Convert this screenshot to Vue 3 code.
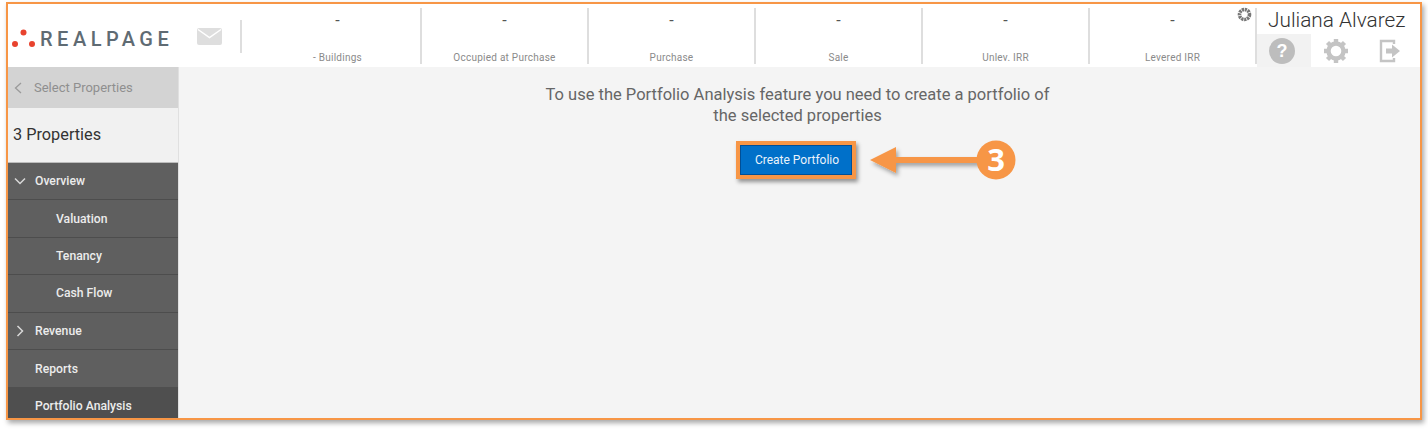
<template>
  <div class="page">
    <div class="frame">
      <header class="topbar">
        <div class="logo">
          <svg class="logo-dots" width="24" height="18" viewBox="0 0 24 18">
            <circle cx="11.500" cy="3.500" r="3" fill="#e8432e" />
            <circle cx="3" cy="15" r="3" fill="#e8432e" />
            <circle cx="20" cy="15" r="3" fill="#e8432e" />
          </svg>
          <span class="logo-text">REALPAGE</span>
        </div>
        <div class="mail">
          <svg width="25" height="17" viewBox="0 0 25 17">
            <rect width="25" height="17" rx="2" fill="#dedede" />
            <path d="M1 1.500 L12.500 9.500 L24 1.500" fill="none" stroke="#fff" stroke-width="1.500" />
          </svg>
        </div>
        <div class="stats">
          <div v-for="s in stats" :key="s" class="stat">
            <div class="stat-value">-</div>
            <div class="stat-label">{{ s }}</div>
          </div>
        </div>
        <div class="user">
          <div class="user-name">Juliana Alvarez</div>
          <div class="user-icons">
            <div class="user-icon help">
              <svg width="26" height="26" viewBox="0 0 26 26">
                <circle cx="13" cy="13" r="13" fill="#bdbdbd" />
                <text x="13" y="19" text-anchor="middle" class="help-mark">?</text>
              </svg>
            </div>
            <div class="user-icon">
              <svg width="26" height="26" viewBox="0 0 26 26">
                <circle cx="13" cy="13" r="7.500" fill="none" stroke="#c4c4c4" stroke-width="4.400" />
                <g stroke="#c4c4c4" stroke-width="4.400">
                  <path d="M13 1v4M13 21v4M1 13h4M21 13h4M4.500 4.500l2.800 2.800M18.700 18.700l2.800 2.800M4.500 21.500l2.800-2.800M18.700 7.300l2.800-2.800" />
                </g>
              </svg>
            </div>
            <div class="user-icon">
              <svg width="22" height="24" viewBox="0 0 22 24">
                <path d="M15 5V2H2v20h13v-3" fill="none" stroke="#c4c4c4" stroke-width="2.400" />
                <path d="M7 9.500h6V5.500l8 6.500-8 6.500v-4H7z" fill="#c4c4c4" />
              </svg>
            </div>
          </div>
        </div>
        <svg class="spinner" width="15" height="15" viewBox="0 0 15 15">
          <circle cx="7.500" cy="7.500" r="5" fill="none" stroke="#777" stroke-width="3.600" stroke-dasharray="2.200 0.700" />
        </svg>
      </header>

      <div class="body">
        <aside class="sidebar">
          <div class="back">
            <svg width="8" height="12" viewBox="0 0 8 12">
              <path d="M7 1 L1.500 6 L7 11" fill="none" stroke="#9a9a9a" stroke-width="1.300" />
            </svg>
            <span>Select Properties</span>
          </div>
          <div class="count">3 Properties</div>
          <nav class="nav">
            <div class="nav-row">
              <svg class="chev" width="12" height="8" viewBox="0 0 12 8">
                <path d="M1 1.500 L6 6.500 L11 1.500" fill="none" stroke="#d8d8d8" stroke-width="1.500" />
              </svg>
              <span>Overview</span>
            </div>
            <div class="nav-row sub">Valuation</div>
            <div class="nav-row sub">Tenancy</div>
            <div class="nav-row sub">Cash Flow</div>
            <div class="nav-row">
              <svg class="chev" width="12" height="12" viewBox="0 0 12 12">
                <path d="M3.500 1 L8.500 6 L3.500 11" fill="none" stroke="#d8d8d8" stroke-width="1.500" />
              </svg>
              <span>Revenue</span>
            </div>
            <div class="nav-row plain">Reports</div>
            <div class="nav-row plain active">Portfolio Analysis</div>
          </nav>
        </aside>

        <main class="content">
          <p class="message">To use the Portfolio Analysis feature you need to create a portfolio of the selected properties</p>
          <button class="create">Create Portfolio</button>
        </main>
      </div>

      <svg class="callout" width="150" height="44" viewBox="0 0 150 44">
        <defs>
          <filter id="arrowShadow" x="-10%" y="-30%" width="125%" height="170%">
            <feDropShadow dx="2" dy="3" stdDeviation="2" flood-color="#000" flood-opacity="0.35" />
          </filter>
        </defs>
        <path d="M1 21 L27 8 V18 H112 V24 H27 V34 Z" fill="#f79646" filter="url(#arrowShadow)" />
        <circle cx="127" cy="21" r="19.500" fill="#f79646" />
        <text x="127" y="32" text-anchor="middle" class="callout-num">3</text>
      </svg>
    </div>
  </div>
</template>

<script setup>
const stats = ['- Buildings', 'Occupied at Purchase', 'Purchase', 'Sale', 'Unlev. IRR', 'Levered IRR']
</script>

<style>
html, body {
  margin: 0;
  background: #fff;
}
</style>

<style scoped>
.page {
  width: 1428px;
  height: 430px;
  box-sizing: border-box;
  padding: 2px 6px 0 6px;
  font-family: Roboto, "Liberation Sans", sans-serif;
  overflow: hidden;
}
.frame {
  position: relative;
  width: 1416px;
  height: 418px;
  box-sizing: border-box;
  border: 2px solid #f79646;
  box-shadow: 2px 3px 5px rgba(0, 0, 0, 0.35);
  background: #f4f4f4;
  display: flex;
  flex-direction: column;
}
.topbar {
  position: relative;
  height: 63px;
  flex: none;
  background: #fff;
  display: flex;
}
.logo {
  width: 178px;
  flex: none;
  display: flex;
  align-items: center;
  padding: 7px 0 0 4px;
  box-sizing: border-box;
}
.logo-dots {
  flex: none;
  margin-top: -2px;
}
.logo-text {
  margin-left: 4px;
  font-size: 20px;
  font-weight: 500;
  letter-spacing: 4.500px;
  color: #5f6b73;
  white-space: nowrap;
}
.mail {
  width: 54px;
  flex: none;
  height: 33px;
  box-sizing: border-box;
  margin: 16px 0 0 2px;
  padding: 8px 0 0 9px;
  border-right: 2px solid #dedede;
}
.stats {
  display: flex;
  margin-left: 13px;
}
.stat {
  width: 167px;
  height: 56px;
  margin-top: 4px;
  box-sizing: border-box;
  border-right: 2px solid #dedede;
  text-align: center;
}
.stat-value {
  font-size: 16px;
  line-height: 20px;
  margin-top: 3px;
  color: #555;
}
.stat-label {
  font-size: 10px;
  letter-spacing: 0.250px;
  line-height: 12px;
  margin-top: 21px;
  color: #8a8a8a;
}
.user {
  flex: 1;
  display: flex;
  flex-direction: column;
}
.user-name {
  height: 30px;
  line-height: 33px;
  padding-left: 11px;
  font-size: 20.800px;
  font-weight: 300;
  color: #333;
  white-space: nowrap;
}
.user-icons {
  display: flex;
  height: 33px;
}
.user-icon {
  width: 54px;
  box-sizing: border-box;
  padding-right: 4px;
  display: flex;
  align-items: center;
  justify-content: center;
}
.user-icon.help {
  background: #f2f2f2;
}
.help-mark {
  font-family: "Liberation Sans", sans-serif;
  font-size: 18px;
  font-weight: 700;
  fill: #fff;
}
.spinner {
  position: absolute;
  left: 1229px;
  top: 3px;
}
.body {
  flex: 1;
  display: flex;
  min-height: 0;
}
.sidebar {
  width: 170px;
  flex: none;
  background: #f1f1f1;
  border-right: 1px solid #e0e0e0;
  display: flex;
  flex-direction: column;
  overflow: hidden;
}
.back {
  height: 41px;
  flex: none;
  background: #d3d3d3;
  display: flex;
  align-items: center;
  gap: 12px;
  padding-left: 6px;
  font-size: 13px;
  color: #8f8f8f;
}
.count {
  height: 55px;
  flex: none;
  box-sizing: border-box;
  padding: 0 0 0 5px;
  line-height: 54px;
  font-size: 16.300px;
  color: #333;
  border-bottom: 1px solid #bdbdbd;
}
.nav {
  flex: 1;
  background: #5f5f5f;
}
.nav-row {
  height: 37.400px;
  box-sizing: border-box;
  border-bottom: 1px solid #4d4d4d;
  display: flex;
  align-items: center;
  gap: 9px;
  padding-left: 6px;
  font-size: 12.200px;
  font-weight: 500;
  color: #ececec;
}
.chev {
  flex: none;
}
.nav-row.sub {
  padding-left: 48px;
}
.nav-row.plain {
  padding-left: 27px;
  border-bottom: 0;
}
.nav-row.active {
  background: #4f4f4f;
}
.content {
  flex: 1;
  display: flex;
  flex-direction: column;
  align-items: center;
  padding: 18px 4px 0 0;
  box-sizing: border-box;
}
.message {
  width: 515px;
  margin: 0;
  text-align: center;
  font-size: 16.500px;
  line-height: 20.500px;
  color: #666;
}
.create {
  margin: 15px 0 0 -3px;
  width: 120px;
  height: 38px;
  box-sizing: border-box;
  border: 4px solid #f79646;
  background: #0070c9;
  color: #eaf3fb;
  font-family: inherit;
  font-size: 12px;
  padding: 0 0 0 2px;
  box-shadow: 2px 3px 4px rgba(0, 0, 0, 0.4), inset 0 0 0 1px rgba(0, 40, 90, 0.45);
}
.callout {
  position: absolute;
  left: 861px;
  top: 135px;
}
.callout-num {
  font-family: "Open Sans", "Liberation Sans", sans-serif;
  font-size: 31px;
  font-weight: 700;
  fill: #fff;
}
</style>
